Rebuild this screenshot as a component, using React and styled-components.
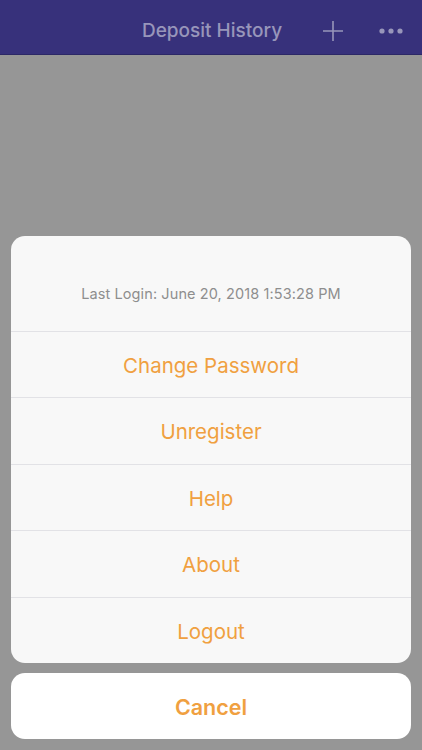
import React from 'react'
import styled, { createGlobalStyle } from 'styled-components'

const Global = createGlobalStyle`
    html, body {
        margin: 0;
        padding: 0;
        background: #969696;
    }
    body {
        font-family: Inter, "Liberation Sans", sans-serif;
    }
`

const Page = styled.div`
    width: 422px;
    height: 750px;
    display: flex;
    flex-direction: column;
    background: #969696;
    overflow: hidden;
`

const NavBar = styled.div`
    height: 55px;
    flex-shrink: 0;
    box-sizing: border-box;
    padding-top: 7px;
    background: #37317b;
    border-bottom: 1px solid #2c2866;
    display: flex;
    align-items: center;
    position: relative;
`

const NavTitle = styled.div`
    flex: 1;
    text-align: center;
    color: #9896ba;
    font-size: 19px;
    font-weight: 500;
    padding-left: 2px;
`

const NavActions = styled.div`
    position: absolute;
    right: 19px;
    top: 7px;
    bottom: 0;
    display: flex;
    align-items: center;
    gap: 35px;
`

const Sheet = styled.div`
    margin-top: auto;
    padding: 0 11px 11px;
    display: flex;
    flex-direction: column;
    gap: 10px;
`

const Group = styled.div`
    background: #f8f8f8;
    border-radius: 14px;
    overflow: hidden;
    display: flex;
    flex-direction: column;
`

const Header = styled.div`
    height: 95px;
    display: flex;
    align-items: center;
    justify-content: center;
    padding-top: 21px;
    box-sizing: border-box;
    color: #8e8e8e;
    font-size: 14.5px;
    letter-spacing: 0.1px;
`

const Action = styled.div`
    height: ${p => p.$h || 66}px;
    display: flex;
    align-items: center;
    justify-content: center;
    padding-top: 2px;
    border-top: 1px solid #e2e2e6;
    color: #f0a040;
    font-size: 20.5px;
    font-weight: ${p => (p.$bold ? 600 : 400)};
    background: ${p => (p.$bold ? '#ffffff' : 'transparent')};
    box-sizing: border-box;
`

const CancelGroup = styled(Group)`
    background: #ffffff;
`

const CancelButton = styled(Action)`
    border-top: none;
    font-size: 21.5px;
`

const items = ['Change Password', 'Unregister', 'Help', 'About', 'Logout']

const App = () => {
    return (
        <Page>
            <Global />
            <NavBar>
                <NavTitle>Deposit History</NavTitle>
                <NavActions>
                    <svg width="22" height="22" viewBox="0 0 22 22">
                        <path d="M11 1v20M1 11h20" stroke="#9896ba" strokeWidth="1.6" />
                    </svg>
                    <svg width="24" height="6" viewBox="0 0 24 6">
                        <circle cx="3" cy="3" r="2.6" fill="#9896ba" />
                        <circle cx="12" cy="3" r="2.6" fill="#9896ba" />
                        <circle cx="21" cy="3" r="2.6" fill="#9896ba" />
                    </svg>
                </NavActions>
            </NavBar>
            <Sheet>
                <Group>
                    <Header>Last Login: June 20, 2018 1:53:28 PM</Header>
                    {items.map(t => (
                        <Action key={t} $h={66.5}>{t}</Action>
                    ))}
                </Group>
                <CancelGroup>
                    <CancelButton $bold>Cancel</CancelButton>
                </CancelGroup>
            </Sheet>
        </Page>
    )
}

export default App
